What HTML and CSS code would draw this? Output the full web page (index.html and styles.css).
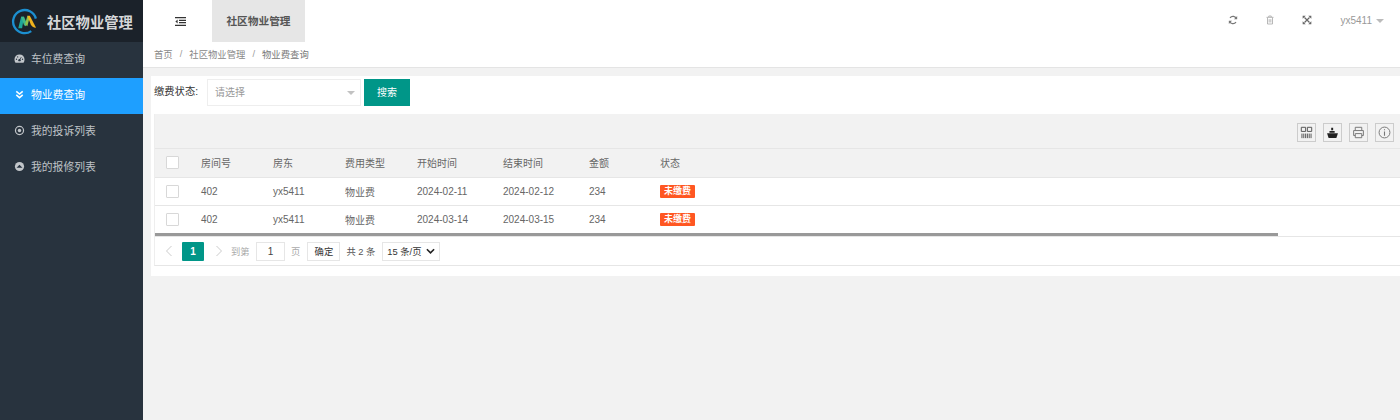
FILE: index.html
```html
<!DOCTYPE html>
<html lang="zh-CN">
<head>
<meta charset="utf-8">
<title>社区物业管理</title>
<link rel="stylesheet" href="styles.css">
</head>
<body>
<div class="app">
  <aside class="side">
    <div class="brand">
      <svg class="logo" viewBox="0 0 28 28" width="27" height="27">
        <path d="M21 24A12 12 0 1 1 25.800 11" fill="none" stroke="#1c8fd0" stroke-width="2.400"/>
        <path d="M7.500 21 L10.500 9 L13.500 9 L11.500 21Z" fill="#1fa79a"/>
        <path d="M10.500 9 L13.500 9 L16 15 L15.500 19 L13.500 18Z" fill="#3fb98a"/>
        <path d="M14.500 17 L17 8 L19.500 9 L17 19Z" fill="#8fc04a"/>
        <path d="M17 8 L19.500 8 L26 20.500 C23 20 21.500 19 20.500 17Z" fill="#f2b31d"/>
      </svg>
      <span class="brand-name">社区物业管理</span>
    </div>
    <nav class="menu">
      <a class="item">
        <svg class="mi" viewBox="0 0 12 12"><path d="M6 1.500A5.500 5.500 0 0 0 .5 7c0 1.300.4 2.400 1.100 3.500h8.800C11.100 9.400 11.500 8.300 11.500 7A5.500 5.500 0 0 0 6 1.500z" fill="#c2c6ca"/><circle cx="6" cy="7.800" r="1.300" fill="#26323f"/><path d="M6 7.500 8 4.500" stroke="#26323f" stroke-width=".9"/><circle cx="2.700" cy="6.800" r=".7" fill="#26323f"/><circle cx="4" cy="4.300" r=".7" fill="#26323f"/><circle cx="9.300" cy="6.800" r=".7" fill="#26323f"/></svg>
        车位费查询
      </a>
      <a class="item active">
        <svg class="mi" viewBox="0 0 12 12"><path d="M2.500 2.500 6 5.500 9.500 2.500M2.500 6.500 6 9.500 9.500 6.500" fill="none" stroke="#fff" stroke-width="1.700"/></svg>
        物业费查询
      </a>
      <a class="item">
        <svg class="mi" viewBox="0 0 12 12"><circle cx="6" cy="6" r="4.400" fill="none" stroke="#c2c6ca" stroke-width="1.300"/><circle cx="6" cy="6" r="1.900" fill="#c2c6ca"/></svg>
        我的投诉列表
      </a>
      <a class="item">
        <svg class="mi" viewBox="0 0 12 12"><circle cx="6" cy="6" r="5" fill="#c2c6ca"/><path d="M2.800 7.300 6 4 9.200 7.300Z" fill="#26323f"/></svg>
        我的报修列表
      </a>
    </nav>
  </aside>

  <main class="main">
    <header class="top">
      <div class="top-left">
        <span class="toggle">
          <svg viewBox="0 0 11 9" width="11" height="9"><path d="M0 .7H11M4 3.300H11M4 5.700H11M0 8.300H11" stroke="#333" stroke-width="1.300"/><path d="M2.600 2.400 .4 4.500 2.600 6.600Z" fill="#333"/></svg>
        </span>
        <span class="tab">社区物业管理</span>
      </div>
      <div class="top-right">
        <svg class="ti" viewBox="0 0 12 12"><path d="M10.300 4.600A4.500 4.500 0 0 0 2.400 3.400M1.700 7.400A4.500 4.500 0 0 0 9.600 8.600" fill="none" stroke="#777" stroke-width="1.500"/><path d="M11 1.200V5.200H7.200ZM1 10.800V6.800H4.800Z" fill="#777"/></svg>
        <svg class="ti trash" viewBox="0 0 12 12"><path d="M1.800 2.800H10.200M4.500 2.500V1.200H7.500V2.500M3 3.200V10.800H9V3.200M5 5V9M7 5V9" fill="none" stroke="#aaa" stroke-width="1"/></svg>
        <svg class="ti full" viewBox="0 0 12 12"><path d="M3 3 9 9M9 3 3 9" stroke="#666" stroke-width="1.400"/><path d="M.8.800H4.500L.8 4.500ZM11.200.800H7.500L11.200 4.500ZM.8 11.200H4.500L.8 7.500ZM11.200 11.200H7.500L11.200 7.500Z" fill="#666"/></svg>
        <span class="user">yx5411<i class="caret"></i></span>
      </div>
    </header>
    <div class="crumbs">
      <span>首页</span><i>/</i><span>社区物业管理</span><i>/</i><span class="cur">物业费查询</span>
    </div>
    <section class="content">
      <div class="panel">
        <form class="search">
          <label class="lab">缴费状态:</label>
          <div class="select"><span>请选择</span><i class="caret small"></i></div>
          <button type="button" class="btn">搜索</button>
        </form>
        <div class="tbl">
          <div class="tools">
            <span class="tool"><svg viewBox="0 0 12 12"><path d="M1.200 1.200H5.200V5H1.200ZM6.800 1.200H10.800V5H6.800ZM1.800 7V11.200M3.500 7V11.200M5.200 7V11.200M6.800 7V11.200M8.500 7V11.200M10.200 7V11.200" fill="none" stroke="#555" stroke-width=".9"/></svg></span>
            <span class="tool"><svg viewBox="0 0 12 12"><path d="M1 6.800H11L9.600 11H2.400Z" fill="#222"/><path d="M3.200 6.300V4.500H8V6.300ZM4.800 4V1.500H6.600V4Z" fill="#222"/></svg></span>
            <span class="tool"><svg viewBox="0 0 12 12"><path d="M3 4V1.200H9V4M3 8.800H1.500V4.200H10.500V8.800H9M3 7H9V10.800H3Z" fill="none" stroke="#777" stroke-width=".9"/></svg></span>
            <span class="tool"><svg viewBox="0 0 12 12"><circle cx="6" cy="6" r="5" fill="none" stroke="#777" stroke-width=".9"/><path d="M6 5V9M6 3V4" stroke="#777" stroke-width="1"/></svg></span>
          </div>
          <table>
            <colgroup>
              <col class="c0"><col class="c1"><col class="c1"><col class="c1"><col class="c2"><col class="c2"><col class="c3"><col>
            </colgroup>
            <thead>
              <tr><th><span class="check"></span></th><th>房间号</th><th>房东</th><th>费用类型</th><th>开始时间</th><th>结束时间</th><th>金额</th><th>状态</th></tr>
            </thead>
            <tbody>
              <tr><td><span class="check"></span></td><td>402</td><td>yx5411</td><td>物业费</td><td>2024-02-11</td><td>2024-02-12</td><td>234</td><td><span class="badge">未缴费</span></td></tr>
              <tr><td><span class="check"></span></td><td>402</td><td>yx5411</td><td>物业费</td><td>2024-03-14</td><td>2024-03-15</td><td>234</td><td><span class="badge">未缴费</span></td></tr>
            </tbody>
          </table>
          <div class="scroll"><div class="thumb"></div></div>
          <div class="pager">
            <svg class="arrow" viewBox="0 0 8 12"><path d="M6.500 1 1.500 6 6.500 11" fill="none" stroke="#ccc" stroke-width="1"/></svg>
            <span class="page">1</span>
            <svg class="arrow" viewBox="0 0 8 12"><path d="M1.500 1 6.500 6 1.500 11" fill="none" stroke="#ccc" stroke-width="1"/></svg>
            <span class="muted to">到第</span>
            <span class="pinput">1</span>
            <span class="muted">页</span>
            <span class="ok">确定</span>
            <span class="total">共 2 条</span>
            <span class="size">15 条/页<svg viewBox="0 0 10 6" width="9" height="6"><path d="M1 1 5 5 9 1" fill="none" stroke="#222" stroke-width="1.800"/></svg></span>
          </div>
        </div>
      </div>
    </section>
  </main>
</div>
</body>
</html>
```
FILE: styles.css
```css
* { box-sizing: border-box; }
html, body { margin: 0; height: 100%; }
body {
  font-family: "Liberation Sans", "Noto Sans CJK SC", sans-serif;
  font-size: 10px;
  color: #666;
  background: #f2f2f2;
  overflow: hidden;
}
.app { display: flex; height: 420px; }

.side { width: 143px; flex: none; background: #28333e; }
.brand {
  height: 42px;
  background: #1b222a;
  display: flex;
  align-items: center;
  gap: 9px;
  padding-left: 11px;
}
.logo { flex: none; }
.brand-name { color: #d5d7d9; font-size: 14.300px; font-weight: 700; }
.menu { display: flex; flex-direction: column; }
.item {
  height: 36px;
  display: flex;
  align-items: center;
  gap: 6px;
  padding: 0 0 5px 14px;
  color: #bfc3c7;
  font-size: 10.800px;
}
.item.active { background: #1e9fff; color: #fff; }
.mi { width: 11px; height: 11px; flex: none; margin-top: 1px; }

.main { flex: 1; min-width: 0; display: flex; flex-direction: column; }
.top {
  height: 42px;
  background: #fff;
  display: flex;
  justify-content: space-between;
}
.top-left { display: flex; align-items: stretch; }
.toggle { width: 69px; display: flex; align-items: center; justify-content: center; padding: 0 0 0 6px; }
.tab {
  width: 93px;
  background: #e6e6e6;
  color: #555;
  font-size: 10.700px;
  font-weight: 700;
  display: flex;
  align-items: center;
  justify-content: center;
  padding-bottom: 2px;
}
.top-right { display: flex; align-items: center; padding-right: 16px; padding-bottom: 2px; }
.ti { width: 10px; height: 10px; margin-right: 27px; }
.ti.full { margin-right: 28px; }
.user { color: #999; font-size: 10px; display: flex; align-items: center; }
.caret {
  width: 0; height: 0;
  margin-left: 4px;
  margin-top: 2px;
  border: 4px solid transparent;
  border-top-color: #bbb;
  border-bottom: 0;
}
.crumbs {
  height: 26px;
  background: #fff;
  border-bottom: 1px solid #e4e4e4;
  display: flex;
  align-items: center;
  padding: 0 0 2px 11px;
  color: #888;
  font-size: 9.350px;
}
.crumbs i { font-style: normal; margin: 0 7px; color: #999; }
.crumbs .cur { color: #777; }

.content { flex: 1; padding: 8px 0 0 8px; }
.panel { background: #fff; padding: 0 0 10px 3px; }
.search { height: 38px; display: flex; align-items: flex-start; padding-top: 3px; }
.lab { width: 53px; color: #333; font-size: 10.300px; line-height: 26px; }
.select {
  width: 154px;
  height: 27px;
  border: 1px solid #eee;
  display: flex;
  align-items: center;
  justify-content: space-between;
  padding: 0 5px 2px 7px;
  color: #999;
  font-size: 10px;
}
.caret.small { margin: 2px 0 0; border-width: 4px; border-bottom: 0; border-top-color: #c2c2c2; }
.btn {
  margin-left: 3px;
  width: 46px;
  height: 27px;
  border: 0;
  padding: 0 0 3px;
  background: #009688;
  color: #fff;
  font: 10px "Liberation Sans", "Noto Sans CJK SC", sans-serif;
}

.tbl { margin-right: 0; border-bottom: 1px solid #e6e6e6; border-left: 1px solid #eee; }
.tools {
  height: 35px;
  background: #f2f2f2;
  border-bottom: 1px solid #e6e6e6;
  display: flex;
  justify-content: flex-end;
  gap: 7px;
  padding: 9px 6px 0 0;
}
.tool {
  width: 19px;
  height: 19px;
  border: 1px solid #ccc;
  display: flex;
  align-items: center;
  justify-content: center;
}
.tool svg { width: 13px; height: 13px; }
table { width: 100%; table-layout: fixed; border-collapse: collapse; }
.c0 { width: 31px; }
.c1 { width: 72px; }
.c2 { width: 86px; }
.c3 { width: 71px; }
th, td {
  height: 28px;
  padding: 0 0 0 15px;
  text-align: left;
  font-weight: 400;
  font-size: 10px;
  color: #666;
  border-bottom: 1px solid #e6e6e6;
}
th { background: #f2f2f2; }
th:first-child, td:first-child { padding-left: 11px; }
tbody tr:last-child td { border-bottom: 0; }
.check {
  display: block;
  width: 13px;
  height: 13px;
  background: #fff;
  border: 1px solid #d8d8d8;
  border-radius: 1px;
}
.badge {
  display: inline-block;
  width: 35px;
  height: 13px;
  line-height: 13px;
  text-align: center;
  background: #ff5722;
  color: #fff;
  font-size: 9px;
  font-weight: 700;
  border-radius: 1px;
}
.scroll { height: 4px; border-bottom: 1px solid #e6e6e6; background: #fff; }
.thumb { width: 1123px; height: 3px; background: #999; }
.pager { height: 28px; display: flex; align-items: center; padding-left: 10px; font-size: 9.300px; color: #555; }
.arrow { width: 8px; height: 12px; flex: none; }
.page {
  width: 22px;
  height: 19px;
  margin: 0 11px 0 9px;
  background: #009688;
  color: #fff;
  font-size: 10px;
  font-weight: 700;
  display: flex;
  align-items: center;
  justify-content: center;
  border-radius: 1px;
}
.muted { color: #aaa; }
.to { margin-left: 8px; }
.pinput {
  width: 29px;
  height: 19px;
  margin: 0 6px 0 6.500px;
  border: 1px solid #e6e6e6;
  color: #444;
  font-size: 10px;
  display: flex;
  align-items: center;
  justify-content: center;
}
.ok {
  width: 33px;
  height: 19px;
  margin-left: 7px;
  border: 1px solid #e6e6e6;
  color: #333;
  display: flex;
  align-items: center;
  justify-content: center;
}
.total { margin-left: 6px; color: #555; }
.size {
  width: 58px;
  height: 19px;
  margin-left: 7px;
  border: 1px solid #e6e6e6;
  color: #333;
  display: flex;
  align-items: center;
  justify-content: space-between;
  padding: 0 4px 0 4px;
}
```
